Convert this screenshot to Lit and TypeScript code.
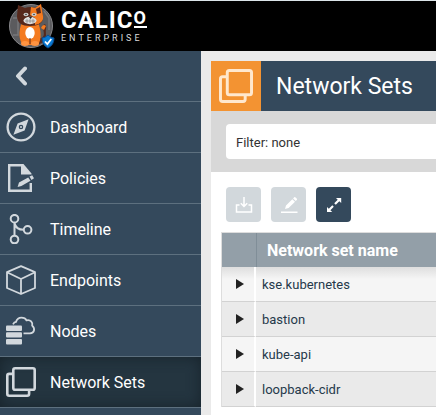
import { LitElement, html, css, svg } from "lit";
import { customElement, state } from "lit/decorators.js";
import { classMap } from "lit/directives/class-map.js";

const icons = {
  dashboard: svg`<circle cx="15" cy="15" r="13.4" fill="none" stroke="currentColor" stroke-width="2.3"/>
    <path fill="currentColor" fill-rule="evenodd" d="M22.6 7.2 18.6 18.4 7.4 22.8 11.6 11.6ZM15 12.7a2.3 2.3 0 1 0 0 4.6 2.3 2.3 0 0 0 0-4.6Z"/>
    <circle cx="15" cy="15" r="1" fill="currentColor"/>`,
  policies: svg`<path fill="none" stroke="currentColor" stroke-width="2.4" d="M16 2.2H3.2V27.8H24.8V20"/>
    <path fill="currentColor" d="M15 1H17.5L25.5 10.5V11.5H15Z"/>
    <path fill="currentColor" d="M11.6 23.9 13 19.4 22.2 14.4 24.5 17.8 15.4 22.9ZM23.5 13.4 26.2 12.2 28 15.3 25.5 17Z"/>`,
  timeline: svg`<g fill="none" stroke="currentColor" stroke-width="2"><circle cx="8.5" cy="4.7" r="3.8"/><circle cx="8.5" cy="25.5" r="3.8"/><circle cx="21.6" cy="15.8" r="3.8"/><path d="M8.5 8.5V21.7M8.5 9C9.5 14 12.5 15.8 17.8 15.8"/></g>`,
  endpoints: svg`<g fill="none" stroke="currentColor" stroke-width="1.8" stroke-linejoin="round"><path d="M15 1.2 29 7.2V23L15 29 1 23V7.2ZM1 7.2 15 14 29 7.2M15 14V29"/></g>`,
  nodes: svg`<g fill="currentColor"><rect x="0" y="9.5" width="16" height="5.4" rx="1"/><rect x="0" y="16.2" width="16" height="5.4" rx="1"/><rect x="0" y="23" width="16" height="5.4" rx="1"/></g>
    <path fill="none" stroke="currentColor" stroke-width="1.8" d="M7 8.3C8 6.4 9 6 10 5.9 11 2.8 13 1.6 15.4 1.6 18 1.6 19.8 2.8 20.5 4.3 24.5 3.2 27 6.4 26.2 9.6 29.4 12.5 28.5 17.3 24 17.4H17.5"/>`,
  sets: svg`<g fill="none" stroke="currentColor" stroke-width="2.6"><rect x="7.3" y="1.3" width="21.4" height="21.4" rx="1.8"/><path d="M7 6.9H3.2Q1.3 6.9 1.3 8.8V26.8Q1.3 28.7 3.2 28.7H21.2Q23.1 28.7 23.1 26.8V23"/></g>`,
};

type IconName = keyof typeof icons;

const icon = (name: IconName) =>
  html`<svg class="icon" viewBox="0 0 30 30" aria-hidden="true">${icons[name]}</svg>`;

const NAV: { label: string; icon: IconName }[] = [
  { label: "Dashboard", icon: "dashboard" },
  { label: "Policies", icon: "policies" },
  { label: "Timeline", icon: "timeline" },
  { label: "Endpoints", icon: "endpoints" },
  { label: "Nodes", icon: "nodes" },
  { label: "Network Sets", icon: "sets" },
];

@customElement("app-brand")
class AppBrand extends LitElement {
  static styles = css`
    :host { display: flex; align-items: center; gap: 5px; height: 50px; padding-left: 8px; background: #000; border-top: 1px solid #dce5e9; color: #fff; }
    .mascot { width: 48px; height: 50px; flex: none; }
    .words { display: flex; flex-direction: column; gap: 4px; }
    .name { display: flex; align-items: flex-start; font: 700 24px/20px "Roboto", sans-serif; letter-spacing: 1px; }
    .last { font-size: 18px; line-height: 14px; margin-top: 1px; padding-bottom: 1px; border-bottom: 2px solid #fff; }
    .edition { font: 400 9px/9px "Roboto", sans-serif; letter-spacing: 3px; color: #ddd; }
  `;
  render() {
    return html`
      <svg class="mascot" viewBox="0 0 48 50" aria-hidden="true">
        <circle cx="23" cy="25" r="21.5" fill="#5b5b5e" stroke="#88888b"/>
        <path d="M5 17h5v17H5M36 10l5 7v12" fill="none" stroke="#77777a" stroke-width="1.5"/>
        <path d="M30 37C40 38 34 28 35 25S39 23 38 28 41 40 31 43" fill="#56281b"/>
        <path d="M33 27Q35 22 38 25L36 29Z" fill="#f47b20"/>
        <path d="M14 21C10 31 11 39 15 44H30C34 38 33 29 30 21Z" fill="#f47b20"/>
        <path d="M10 4 17 7Q22 5 27 7L33 3 35 15C36 22 30 25 22 25S9 22 9 15Z" fill="#56281b"/>
        <path d="M23 6 27 7 33 3 35 15C36 20 32 23 27 24V17L22 14Z" fill="#f47b20"/>
        <path d="M28 8 32 6 33 12 29 13Z" fill="#56281b"/>
        <ellipse cx="22" cy="32" rx="4.7" ry="6" fill="#fff"/>
        <ellipse cx="22" cy="19.5" rx="6.5" ry="3.7" fill="#ddd"/>
        <path d="M17 20H27M19 18v4M22 18v4M25 18v4" stroke="#777" stroke-width=".6"/>
        <ellipse cx="18" cy="13.5" rx="2.5" ry="1.8" fill="#ccc"/><ellipse cx="26" cy="13.5" rx="2.5" ry="1.8" fill="#ccc"/>
        <circle cx="18" cy="13.5" r=".8" fill="#333"/><circle cx="26" cy="13.5" r=".8" fill="#333"/>
        <path d="M21 16h3l-1.5 2Z" fill="#222"/>
        <ellipse cx="17" cy="42.5" rx="4" ry="2.5" fill="#ff9340"/><ellipse cx="27" cy="42.5" rx="4" ry="2.5" fill="#ff9340"/>
        <path d="M22 37v6" stroke="#56281b"/>
        <path d="M40 34Q43 37 46 37 46 44 40 47 34 44 34 37 37 37 40 34Z" fill="#0878d1" stroke="#0b4c91"/>
        <path d="M37 40.5 39.3 43 43.3 38" fill="none" stroke="#fff" stroke-width="1.8"/>
      </svg>
      <div class="words">
        <div class="name">CALIC<span class="last">O</span></div>
        <div class="edition">ENTERPRISE</div>
      </div>`;
  }
}

@customElement("app-sidebar")
class AppSidebar extends LitElement {
  static styles = css`
    :host { display: block; background: #34495c; color: #fff; font: 400 16px/20px "Roboto", sans-serif; }
    .collapse, .item { box-sizing: border-box; display: flex; align-items: center; width: 100%; height: 51px; border: 0; border-bottom: 1px solid #5d707f; background: none; color: inherit; }
    .collapse { padding: 0 15px; color: #d2d8dd; cursor: pointer; }
    .chevron { width: 12px; height: 20px; }
    .item { gap: 14px; padding-left: 6px; text-decoration: none; }
    .label { padding-top: 2px; }
    .active { background: #243540; box-shadow: inset 0 0 14px #17232b; }
    .icon { width: 30px; height: 30px; flex: none; color: #d2d8dd; }
  `;
  render() {
    return html`
      <button class="collapse" aria-label="Collapse menu">
        <svg class="chevron" viewBox="0 0 12 20"><path d="M10 2.5 3 10l7 7.5" fill="none" stroke="currentColor" stroke-width="4" stroke-linecap="round" stroke-linejoin="round"/></svg>
      </button>
      <nav>
        ${NAV.map((n) => {
          const active = n.label === "Network Sets";
          return html`<a class=${classMap({ item: true, active })} href="#" aria-current=${active ? "page" : "false"}>${icon(n.icon)}<span class="label">${n.label}</span></a>`;
        })}
      </nav>`;
  }
}

@customElement("network-sets")
class NetworkSets extends LitElement {
  static styles = css`
    :host { display: block; padding: 10px 0 0 10px; background: #eaeaea; font: 400 13px/20px "Roboto", sans-serif; }
    .panel { box-sizing: border-box; min-height: 100%; background: #fff; }
    .heading { display: flex; align-items: center; height: 50px; background: #34495c; color: #fff; }
    .badge { display: grid; place-items: center; width: 50px; height: 50px; background: #f39332; color: #ffe8ce; }
    .icon { width: 34px; height: 34px; }
    h1 { margin: 0; padding: 2px 0 0 15px; font-size: 23px; line-height: 30px; font-weight: 400; white-space: nowrap; }
    .filter { padding: 13px 0 13px 15px; background: #d8d8d8; }
    .field { display: block; box-sizing: border-box; width: 100%; height: 35px; border: 0; border-radius: 4px 0 0 4px; padding: 2px 10px 0; background: #fff; color: #333; font: inherit; }
    .tools { display: flex; gap: 10px; padding: 15px 15px 10px; }
    .tool { display: grid; place-items: center; width: 35px; height: 35px; padding: 0; border: 0; border-radius: 4px; background: #34495c; color: #fff; }
    .tool:disabled { background: #d2d8dc; }
    .glyph { width: 18px; height: 18px; }
    .tablebox { padding-left: 10px; }
    table { width: 100%; border-spacing: 0; border-top: 1px solid #ddd; border-left: 1px solid #ddd; table-layout: fixed; }
    .toggle-col { width: 34px; }
    th { height: 34px; padding: 2px 0 0 10px; box-sizing: border-box; background: #939fa8; color: #fff; font-size: 16px; font-weight: 700; text-align: left; border-left: 1px solid #808e98; }
    th:first-child { border-left: 0; }
    td { box-sizing: border-box; height: 35px; padding: 2px 0 0 6px; background: #f5f5f5; color: #25394a; border-bottom: 1px solid #d2d2d2; }
    tr:nth-child(even) td { background: #eaeaea; }
    tr:first-child td { background: linear-gradient(#dedede, #f5f5f5 12px); }
    td:first-child { padding: 0; border-right: 2px solid #fff; text-align: center; }
    .expand { display: inline-grid; place-items: center; width: 20px; height: 20px; padding: 0; border: 0; background: none; color: #222; vertical-align: middle; }
    .arrow { width: 8px; height: 10px; margin-left: 3px; }
  `;

  @state() rows = ["kse.kubernetes", "bastion", "kube-api", "loopback-cidr"];

  render() {
    return html`
      <section class="panel">
        <header class="heading"><span class="badge">${icon("sets")}</span><h1>Network Sets</h1></header>
        <div class="filter"><input class="field" type="text" aria-label="Filter" value="Filter: none" /></div>
        <div class="tools">
          <button class="tool" disabled aria-label="Download">
            <svg class="glyph" viewBox="0 0 18 18" fill="none" stroke="currentColor" stroke-width="1.5"><path d="M9 1V10.5M5.8 7.3 9 10.5 12.2 7.3M4.5 9H1.5V16H16.5V9H13.5"/></svg>
          </button>
          <button class="tool" disabled aria-label="Edit">
            <svg class="glyph" viewBox="0 0 18 18" fill="currentColor"><path d="M5 13 6 9.5 12.3 3.2 15 5.8 8.6 12.1ZM13.1 2.4 14.2 1.3Q14.9.8 15.6 1.4L16.7 2.5Q17.4 3.2 16.8 3.9L15.7 5ZM1 15.5H17.5V17H1Z"/></svg>
          </button>
          <button class="tool" aria-label="Expand all">
            <svg class="glyph" viewBox="0 0 18 18" fill="currentColor"><path d="M11 2H16.2V7L14.3 5.3 10.8 8.8 9.2 7.2 12.7 3.7ZM7.2 16H2V11L3.8 12.7 7.3 9.3 8.8 10.8 5.4 14.3Z"/></svg>
          </button>
        </div>
        <div class="tablebox">
          <table>
            <colgroup><col class="toggle-col" /><col /></colgroup>
            <thead><tr><th aria-label="Details"></th><th scope="col">Network set name</th></tr></thead>
            <tbody>
              ${this.rows.map((r) => html`<tr>
                <td><button class="expand" aria-label="Expand ${r}"><svg class="arrow" viewBox="0 0 8 10"><path d="M0 0 8 5 0 10Z" fill="currentColor"/></svg></button></td>
                <td>${r}</td>
              </tr>`)}
            </tbody>
          </table>
        </div>
      </section>`;
  }
}

@customElement("app-root")
class AppRoot extends LitElement {
  static styles = css`
    :host { display: flex; flex-direction: column; min-height: 100vh; }
    .body { display: grid; grid-template-columns: 201px minmax(0, 1fr); flex: 1; }
  `;
  render() {
    return html`<app-brand></app-brand>
      <div class="body"><app-sidebar></app-sidebar><network-sets></network-sets></div>`;
  }
}
